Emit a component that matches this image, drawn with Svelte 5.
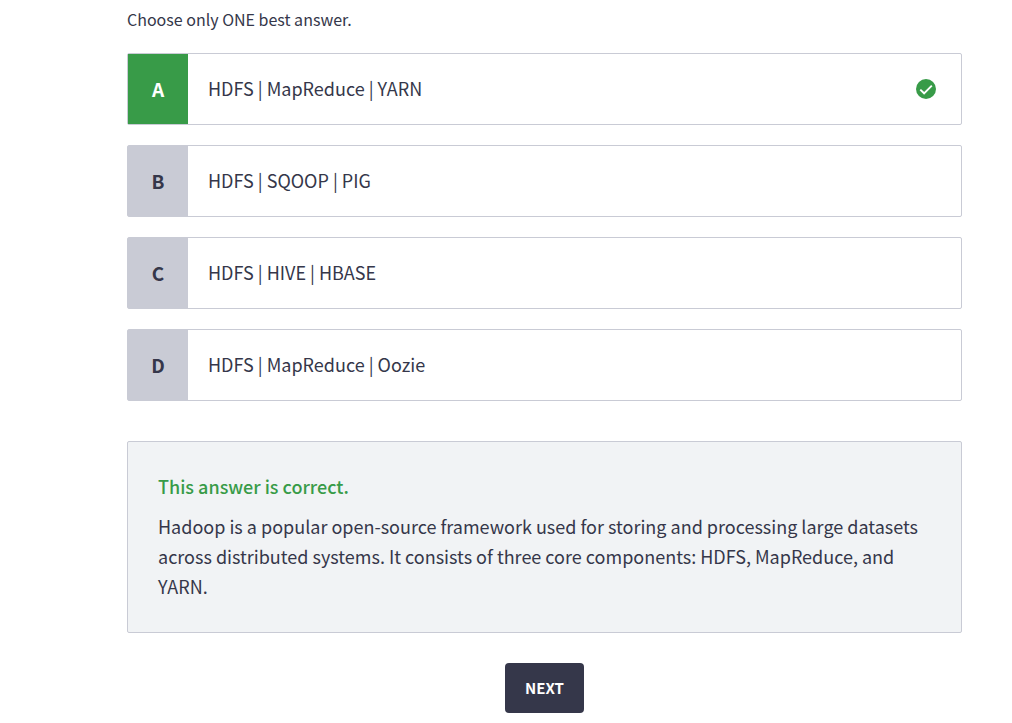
<script>
  const answers = [
    { key: 'A', text: 'HDFS | MapReduce | YARN', correct: true },
    { key: 'B', text: 'HDFS | SQOOP | PIG' },
    { key: 'C', text: 'HDFS | HIVE | HBASE' },
    { key: 'D', text: 'HDFS | MapReduce | Oozie' }
  ];
</script>

<main>
  <p class="hint">Choose only ONE best answer.</p>
  <div class="answers">
    {#each answers as a}
      <button type="button" class="answer" class:correct={a.correct}>
        <span class="key">{a.key}</span>
        <span class="label">{a.text}</span>
        {#if a.correct}
          <svg class="check" viewBox="0 0 20 20" aria-hidden="true">
            <circle cx="10" cy="10" r="10" fill="#389b48" />
            <path d="M4.3 10.6l3.8 3.7 7.7-7.7" fill="none" stroke="#fff" stroke-width="1.9" />
          </svg>
        {/if}
      </button>
    {/each}
  </div>
  <section class="feedback">
    <h2>This answer is correct.</h2>
    <p>Hadoop is a popular open-source framework used for storing and processing large datasets across distributed systems. It consists of three core components: HDFS, MapReduce, and YARN.</p>
  </section>
  <button type="button" class="next">NEXT</button>
</main>

<style>
  :global(body) {
    background: #fff;
  }
  main {
    display: flex;
    flex-direction: column;
    padding: 7px 50px 10px 127px;
    font-family: "Noto Sans CJK SC", "Noto Sans", sans-serif;
    color: #35374a;
  }
  p, h2 {
    margin: 0;
  }
  button {
    font-family: inherit;
    color: inherit;
    cursor: pointer;
  }
  .hint {
    font-size: 16px;
    line-height: 24px;
  }
  .answers {
    display: flex;
    flex-direction: column;
    gap: 20px;
    margin-top: 22px;
  }
  .answer {
    display: flex;
    align-items: center;
    min-height: 72px;
    padding: 0 25px 0 0;
    border: 1px solid #c9cbd5;
    border-radius: 2px;
    background: #fff;
    font-size: 18px;
    line-height: 30px;
    text-align: left;
  }
  .key {
    display: flex;
    align-items: center;
    justify-content: center;
    align-self: stretch;
    width: 60px;
    background: #c9cbd5;
    font-size: 19px;
    font-weight: 700;
  }
  .correct .key {
    background: #389b48;
    color: #fff;
  }
  .label {
    flex: 1;
    padding: 0 20px 2px;
  }
  .check {
    width: 20px;
    height: 20px;
  }
  .feedback {
    margin-top: 40px;
    padding: 29px 30px 31px;
    border: 1px solid #c9cbd5;
    border-radius: 2px;
    background: #f1f3f5;
    font-size: 18px;
    line-height: 30px;
  }
  h2 {
    margin-bottom: 10px;
    font-size: 18px;
    line-height: 30px;
    font-weight: 500;
    color: #389b48;
  }
  .next {
    align-self: center;
    margin-top: 30px;
    height: 50px;
    padding: 0 20px;
    border: 0;
    border-radius: 4px;
    background: #35374a;
    color: #fff;
    font-size: 15px;
    line-height: 24px;
    font-weight: 700;
  }
</style>
